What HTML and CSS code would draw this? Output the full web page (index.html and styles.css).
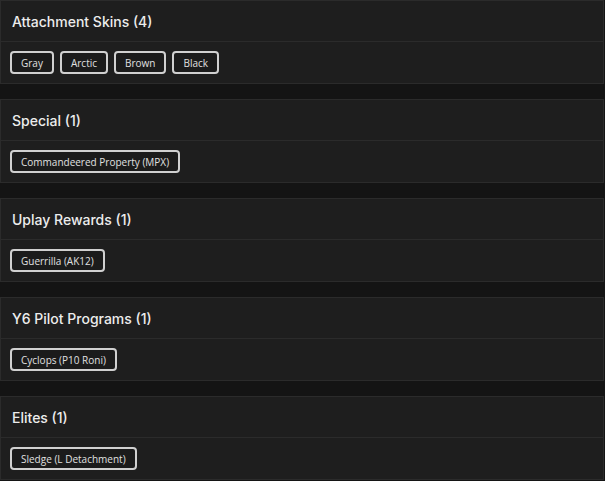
FILE: index.html
```html
<!DOCTYPE html>
<html>
<head>
<meta charset="utf-8">
<link rel="stylesheet" href="styles.css">
</head>
<body>
<div class="list">
  <section class="card">
    <div class="card-head">Attachment Skins (4)</div>
    <div class="card-body">
      <span class="tag">Gray</span>
      <span class="tag">Arctic</span>
      <span class="tag">Brown</span>
      <span class="tag">Black</span>
    </div>
  </section>
  <section class="card">
    <div class="card-head">Special (1)</div>
    <div class="card-body">
      <span class="tag">Commandeered Property (MPX)</span>
    </div>
  </section>
  <section class="card">
    <div class="card-head">Uplay Rewards (1)</div>
    <div class="card-body">
      <span class="tag">Guerrilla (AK12)</span>
    </div>
  </section>
  <section class="card">
    <div class="card-head">Y6 Pilot Programs (1)</div>
    <div class="card-body">
      <span class="tag">Cyclops (P10 Roni)</span>
    </div>
  </section>
  <section class="card">
    <div class="card-head">Elites (1)</div>
    <div class="card-body">
      <span class="tag">Sledge (L Detachment)</span>
    </div>
  </section>
</div>
</body>
</html>
```
FILE: styles.css
```css
html, body {
  margin: 0;
  padding: 0;
  background: #141414;
}
body {
  font-family: "Open Sans", "Noto Sans", sans-serif;
  color: #e6e6e6;
}
.list {
  display: flex;
  flex-direction: column;
  gap: 15px;
  width: 604px;
}
.card {
  background: #1e1e1e;
  border: 1px solid #2b2b2b;
}
.card-head {
  height: 41px;
  box-sizing: border-box;
  padding-left: 11px;
  padding-top: 1px;
  display: flex;
  align-items: center;
  font-family: Inter, "Open Sans", sans-serif;
  font-size: 14px;
  font-weight: 500;
  color: #ececec;
  border-bottom: 1px solid #2b2b2b;
}
.card-body {
  display: flex;
  gap: 6px;
  padding: 9px;
}
.tag {
  display: inline-flex;
  align-items: center;
  height: 23px;
  box-sizing: border-box;
  padding: 0 9px;
  border: 2px solid #d0d0d0;
  border-radius: 4px;
  background: #1b1b1b;
  font-size: 10px;
  color: #e0e0e0;
}
```
